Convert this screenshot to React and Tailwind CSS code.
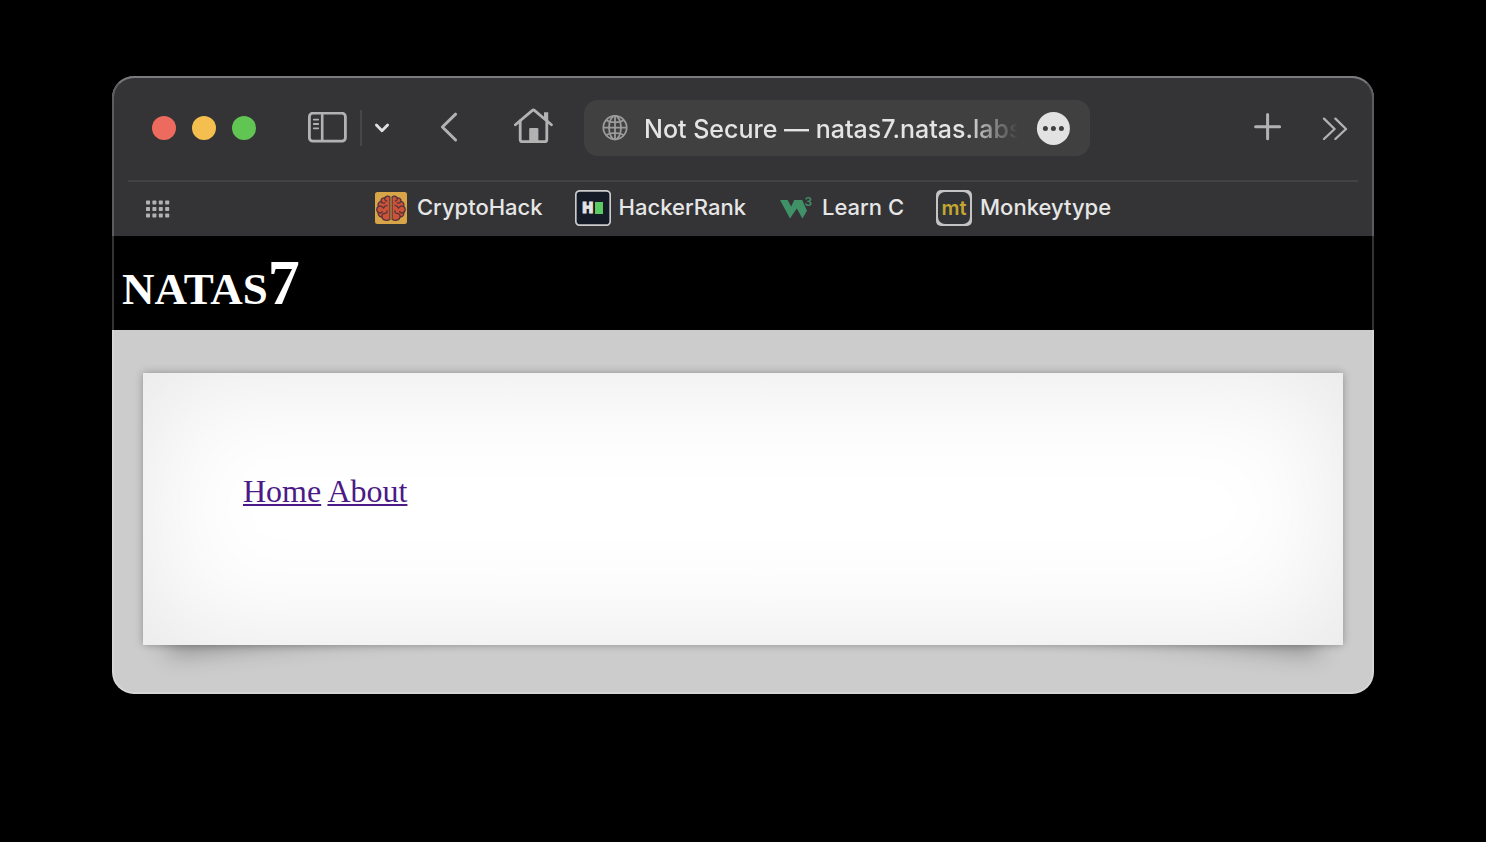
import React from "react";

function ToolButton({ label, className = "", children }) {
  return (
    <button type="button" aria-label={label} className={`shrink-0 text-[#b2b2b3] ${className}`}>
      {children}
    </button>
  );
}

function SidebarIcon() {
  return (
    <svg width="40" height="32" viewBox="0 0 40 32" fill="none" stroke="currentColor">
      <rect x="1.4" y="1.2" width="36" height="28" rx="3.5" strokeWidth="2.8" />
      <path d="M14.2 1.2v28" strokeWidth="2.6" />
      <path d="M5.8 7.6h4.4M5.8 12h4.4M5.8 16.3h4.4" strokeWidth="1.8" strokeLinecap="round" />
    </svg>
  );
}

function HomeIcon() {
  return (
    <svg width="40" height="36" viewBox="0 0 40 36" fill="none" stroke="currentColor" strokeWidth="2.8" strokeLinecap="round" strokeLinejoin="round">
      <path d="M2.4 16.8 19.4 2.4a1.5 1.5 0 0 1 2 0L38.4 16.8" />
      <path d="M7.2 13v18.4a2.2 2.2 0 0 0 2.2 2.2h22.2a2.2 2.2 0 0 0 2.2-2.2V13" />
      <path d="M31 4.2h4.2v10.4l-4.2-3.6z" fill="currentColor" stroke="none" />
      <path d="M16.2 34V21.2a1.2 1.2 0 0 1 1.2-1.2h6.8a1.2 1.2 0 0 1 1.2 1.2V34z" fill="currentColor" stroke="none" />
    </svg>
  );
}

function GlobeIcon() {
  return (
    <svg width="26" height="26" viewBox="0 0 26 26" fill="none" stroke="#9b9b9b" strokeWidth="1.8" className="shrink-0" aria-hidden="true">
      <circle cx="13" cy="12.6" r="11.7" />
      <ellipse cx="13" cy="12.6" rx="6" ry="11.7" />
      <path d="M13 .8v23.6M1 12.6h24M3.8 5C8.6 8.2 17.4 8.2 22.2 5M3.8 20.2c4.8-3.2 13.6-3.2 18.4 0" />
    </svg>
  );
}

function GridIcon() {
  return (
    <svg width="24" height="18" viewBox="0 0 24 18" fill="currentColor">
      {[0, 6.4, 12.8, 19.2].map((x) =>
        [0.5, 7, 13.5].map((y) => <rect key={`${x}-${y}`} x={x} y={y} width="4" height="4" rx="0.7" />)
      )}
    </svg>
  );
}

function CryptoHackIcon() {
  const lobe =
    "M15 5.2C13.4 3.6 10.6 4 9.8 6 7.4 5.6 5.6 7.4 6 9.4 3.6 10 2.4 12.4 3.4 14.4 1.2 16 1.2 19 3.2 20.4 2.6 23 4.4 25 6.8 25c.8 3.2 5.4 4.4 8.2 2.2z";
  const folds = "M9.8 6c-.4 1.6.4 2.8 1.8 3M6 9.4c.8 1.6 2.4 2 3.8 1.4M3.4 14.4c2.2-.8 4.4 0 5 1.8M12 13.4c-1.8.2-3 1.4-3.6 2.8M3.2 20.4c1.6 1 3.4.4 4.2-.8M6.8 25c-.2-2.2 1.2-3.6 3.2-3.6 1.6 0 2.4-1.2 2-2.6";
  return (
    <svg width="36" height="36" viewBox="-2 -2 36 36" aria-hidden="true">
      <rect width="32" height="32" rx="2.5" fill="#d7a548" />
      <g fill="#cd5338" stroke="#54333c" strokeWidth="1.3" strokeLinecap="round" strokeLinejoin="round">
        <path d={lobe} />
        <path d={folds} fill="none" />
        <g transform="translate(32 0) scale(-1 1)">
          <path d={lobe} />
          <path d={folds} fill="none" />
        </g>
      </g>
      <path d="M16 4.5v23" stroke="#9b8140" strokeWidth="1.2" />
    </svg>
  );
}

function HackerRankIcon() {
  return (
    <svg width="36" height="36" viewBox="0 0 36 36" aria-hidden="true">
      <rect x="0.8" y="0.8" width="34.4" height="34.4" rx="4" fill="#151b27" stroke="#cbcbcc" strokeWidth="1.7" />
      <text x="7.4" y="23.4" fontFamily="Inter" fontWeight="900" fontSize="14" fill="#e4e4e4" stroke="#e4e4e4" strokeWidth="1">H</text>
      <path d="M20 12h8v12h-8z" fill="#5bcb62" />
    </svg>
  );
}

function W3Icon() {
  return (
    <svg width="36" height="36" viewBox="0 0 36 36" fill="#409068" aria-hidden="true">
      <path d="M2 10h7.6l3.6 6.4 3-6.4h8l4.8 10.8-4.6 7.8-5.6-10-6.8 10z" />
      <text x="26.4" y="15.8" fontFamily="Inter" fontWeight="600" fontSize="12">3</text>
    </svg>
  );
}

function MonkeytypeIcon() {
  return (
    <svg width="36" height="36" viewBox="0 0 36 36" aria-hidden="true">
      <rect width="36" height="36" rx="5" fill="#c4c4c5" />
      <rect x="2" y="2" width="32" height="32" rx="7" fill="#333437" />
      <text x="18" y="25" textAnchor="middle" fontFamily="Inter" fontWeight="600" fontSize="20" fill="#c4a632">mt</text>
    </svg>
  );
}

const bookmarks = [
  { name: "CryptoHack", Icon: CryptoHackIcon },
  { name: "HackerRank", Icon: HackerRankIcon },
  { name: "Learn C", Icon: W3Icon },
  { name: "Monkeytype", Icon: MonkeytypeIcon },
];

function Toolbar() {
  return (
    <div className="flex h-[104px] items-center pl-10 pr-6">
      <div className="flex shrink-0 gap-4">
        <button type="button" aria-label="Close" className="size-6 rounded-full bg-[#ed6a5e]" />
        <button type="button" aria-label="Minimize" className="size-6 rounded-full bg-[#f5bf4f]" />
        <button type="button" aria-label="Zoom" className="size-6 rounded-full bg-[#61c554]" />
      </div>
      <ToolButton label="Show sidebar" className="ml-13">
        <SidebarIcon />
      </ToolButton>
      <div className="ml-3 h-9 w-0.5 shrink-0 bg-[#464648]" />
      <ToolButton label="Tab groups" className="ml-3">
        <svg width="16" height="12" viewBox="0 0 16 12" fill="none" stroke="#e0e0e0" strokeWidth="2.8" strokeLinecap="round" strokeLinejoin="round">
          <path d="M2.4 3 8 8.8 13.6 3" />
        </svg>
      </ToolButton>
      <ToolButton label="Back" className="ml-12">
        <svg width="20" height="32" viewBox="0 0 20 32" fill="none" stroke="currentColor" strokeWidth="3" strokeLinecap="round" strokeLinejoin="round">
          <path d="M17.6 2.2 4.4 15 17.6 28" />
        </svg>
      </ToolButton>
      <ToolButton label="Home" className="ml-[55px] pb-1">
        <HomeIcon />
      </ToolButton>
      <div className="ml-[31px] flex h-14 w-[506px] min-w-0 items-center rounded-[14px] bg-[#404041] pl-[18px] pr-5">
        <GlobeIcon />
        <div className="ml-4 mt-px flex-1 overflow-hidden whitespace-nowrap text-[25px] font-medium leading-8 text-[#e4e4e4] [mask-image:linear-gradient(to_right,black_322px,transparent_374px)]">
          Not Secure — natas7.natas.labs
        </div>
        <button type="button" aria-label="Page menu" className="ml-4 shrink-0">
          <svg width="34" height="34" viewBox="0 0 34 34">
            <circle cx="17.4" cy="17.4" r="16.5" fill="#e2e2e2" />
            <g fill="#404041">
              <circle cx="9.4" cy="17.4" r="2.5" />
              <circle cx="17.4" cy="17.4" r="2.5" />
              <circle cx="25.4" cy="17.4" r="2.5" />
            </g>
          </svg>
        </button>
      </div>
      <ToolButton label="New tab" className="ml-auto">
        <svg width="28" height="32" viewBox="0 0 28 32" fill="none" stroke="currentColor" strokeWidth="3" strokeLinecap="round">
          <path d="M13.6 2.6v24.2M1.6 14.7h24" />
        </svg>
      </ToolButton>
      <ToolButton label="More toolbar items" className="ml-10">
        <svg width="28" height="24" viewBox="0 0 28 24" fill="none" stroke="currentColor" strokeWidth="2.3" strokeLinecap="round" strokeLinejoin="round">
          <path d="M2 2.6 12.6 13 2 23M13.4 2.6 24 13 13.4 23" />
        </svg>
      </ToolButton>
    </div>
  );
}

function BookmarksBar() {
  return (
    <nav aria-label="Bookmarks" className="grid h-[54px] grid-cols-[1fr_auto_1fr] items-center px-[34px]">
      <ToolButton label="Show bookmarks" className="justify-self-start">
        <GridIcon />
      </ToolButton>
      <div className="flex gap-8 pb-0.5 pr-0.5">
        {bookmarks.map(({ name, Icon }) => (
          <a key={name} href="#" className="flex items-center gap-2 whitespace-nowrap text-[22px] font-medium leading-7 text-[#e6e6e6]">
            <Icon />
            <span className="pb-0.5">{name}</span>
          </a>
        ))}
      </div>
    </nav>
  );
}

function Card() {
  return (
    <div className="relative isolate">
      <div className="absolute bottom-7 left-6 -z-10 h-[55%] w-1/2 max-w-[400px] origin-center -rotate-6 -skew-x-6 shadow-[0_16px_24px_rgba(0,0,0,0.3)]" />
      <div className="absolute bottom-7 right-6 -z-10 h-[55%] w-1/2 max-w-[400px] origin-center rotate-6 skew-x-6 shadow-[0_16px_24px_rgba(0,0,0,0.3)]" />
      <main className="bg-white p-25 shadow-[0_0_8px_rgba(0,0,0,0.3),inset_0_0_120px_rgba(0,0,0,0.1)]">
        <div className="min-h-18 font-['Liberation_Serif',serif] text-[32px] leading-9 text-[#4b1a87]">
          <a href="#home" className="underline decoration-2 underline-offset-2">Home</a>{" "}
          <a href="#about" className="underline decoration-2 underline-offset-2">About</a>
        </div>
      </main>
    </div>
  );
}

export default function App() {
  return (
    <div className="min-h-screen bg-black px-28 py-19 font-['Inter',sans-serif]">
      <div className="relative overflow-hidden rounded-[22px] bg-[#cccccc]">
        <header className="bg-[#343436]">
          <Toolbar />
          <div className="mx-4 h-0.5 bg-[#424244]" />
          <BookmarksBar />
        </header>
        <div className="flex h-[94px] items-center bg-black px-2.5">
          <h1 className="font-['Liberation_Serif',serif] text-[64px] font-bold leading-none text-white [font-variant:small-caps]">natas7</h1>
        </div>
        <div className="px-[31px] pb-[49px] pt-[43px]">
          <Card />
        </div>
        <div className="pointer-events-none absolute inset-0 rounded-[22px] border-2 border-white/20 border-t-white/35" />
      </div>
    </div>
  );
}
